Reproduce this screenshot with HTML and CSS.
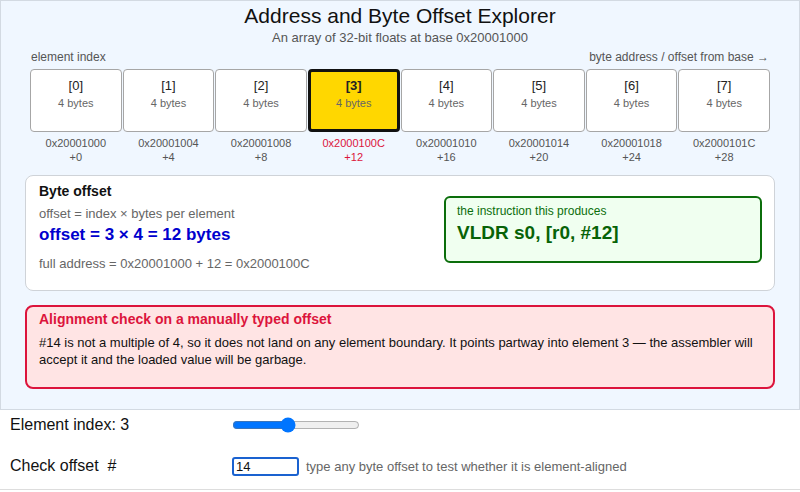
FILE: index.html
```html
<!DOCTYPE html>
<html lang="en">
<head>
    <meta charset="UTF-8">
    <meta name="viewport" content="width=device-width, initial-scale=1.0">
    <title>Address and Byte Offset Explorer</title>
    <link rel="stylesheet" href="styles.css">
</head>
<body>
    <div class="viz">
        <h2 class="title">Address and Byte Offset Explorer</h2>
        <p class="subtitle">An array of 32-bit floats at base 0x20001000</p>
        <div class="axis">
            <span>element index</span>
            <span>byte address / offset from base →</span>
        </div>
        <div class="cells" id="cells"></div>

        <div class="card">
            <div class="calc">
                <h3>Byte offset</h3>
                <p class="muted">offset = index × bytes per element</p>
                <p class="result" id="offset-result"></p>
                <p class="muted full" id="full-address"></p>
            </div>
            <div class="instr">
                <p>the instruction this produces</p>
                <p class="code" id="instr-code"></p>
            </div>
        </div>

        <div class="warn">
            <h3>Alignment check on a manually typed offset</h3>
            <p id="warn-text"></p>
        </div>
    </div>

    <div class="controls">
        <div class="row">
            <label for="index-slider">Element index: <span id="index-label">3</span></label>
            <input type="range" id="index-slider" class="slider" min="0" max="7" value="3">
        </div>
        <div class="row">
            <label for="offset-input">Check offset &nbsp;#</label>
            <input type="text" id="offset-input" class="offset-input" value="14">
            <span class="hint">type any byte offset to test whether it is element-aligned</span>
        </div>
    </div>

    <script>
        document.addEventListener("DOMContentLoaded", function () {
            const base = 0x20001000;
            const size = 4;
            const count = 8;

            const hex = n => "0x" + n.toString(16).toUpperCase();

            function render() {
                const index = parseInt(document.getElementById("index-slider").value, 10);
                const offset = index * size;
                document.getElementById("index-label").innerText = index;

                let html = "";
                for (let i = 0; i < count; i++) {
                    const sel = i === index ? " selected" : "";
                    html += `
                        <div class="col${sel}">
                            <div class="cell">
                                <div class="cell-index">[${i}]</div>
                                <div class="cell-size">${size} bytes</div>
                            </div>
                            <div class="addr">${hex(base + i * size)}</div>
                            <div class="addr">+${i * size}</div>
                        </div>
                    `;
                }
                document.getElementById("cells").innerHTML = html;

                document.getElementById("offset-result").innerText = `offset = ${index} × ${size} = ${offset} bytes`;
                document.getElementById("full-address").innerText = `full address = ${hex(base)} + ${offset} = ${hex(base + offset)}`;
                document.getElementById("instr-code").innerText = `VLDR s0, [r0, #${offset}]`;

                const typed = parseInt(document.getElementById("offset-input").value, 10) || 0;
                const warn = document.querySelector(".warn");
                if (typed % size !== 0) {
                    warn.style.display = "";
                    document.getElementById("warn-text").innerText =
                        `#${typed} is not a multiple of ${size}, so it does not land on any element boundary. It points partway into element ${Math.floor(typed / size)} — the assembler will accept it and the loaded value will be garbage.`;
                } else {
                    warn.style.display = "none";
                }
            }

            document.getElementById("index-slider").addEventListener("input", render);
            document.getElementById("offset-input").addEventListener("input", render);
            render();
        });
    </script>
</body>
</html>
```

FILE: styles.css
```css
* {
    margin: 0;
    padding: 0;
    box-sizing: border-box;
}
body {
    font-family: "Liberation Sans", Arial, sans-serif;
    color: #111;
    background: white;
}
.viz {
    width: 800px;
    background-color: #f0f7ff;
    border: 1px solid #d3dae2;
    padding: 3px 24px 20px;
}
.title {
    font-size: 21px;
    font-weight: normal;
    line-height: 24px;
    text-align: center;
    color: #111;
}
.subtitle {
    font-size: 13px;
    line-height: 15px;
    margin-top: 2px;
    text-align: center;
    color: #555;
}
.axis {
    display: flex;
    justify-content: space-between;
    font-size: 12px;
    line-height: 14px;
    color: #555;
    margin: 5px 6px 0;
}
.cells {
    display: grid;
    grid-template-columns: repeat(8, 1fr);
    gap: 1px;
    margin: 5px 5px 0;
}
.cell {
    height: 63px;
    background: white;
    border: 1px solid #a6a6a6;
    border-radius: 4px;
    text-align: center;
    padding-top: 8px;
}
.cell-index {
    font-size: 13px;
    line-height: 16px;
    color: #222;
}
.cell-size {
    font-size: 11px;
    line-height: 13px;
    margin-top: 3px;
    color: #666;
}
.selected .cell {
    background: #ffd700;
    border: 3px solid #111;
    padding-top: 6px;
}
.selected .cell-index {
    font-weight: bold;
}
.addr {
    font-size: 11px;
    line-height: 14px;
    text-align: center;
    color: #555;
}
.cell + .addr {
    margin-top: 4px;
}
.selected .addr {
    color: #dc143c;
}
.card {
    display: flex;
    justify-content: space-between;
    margin-top: 11px;
    background: white;
    border: 1px solid #cfd3d8;
    border-radius: 8px;
    padding: 6px 12px 19px 13px;
}
.calc h3 {
    font-size: 14px;
    line-height: 17px;
    margin-top: 1px;
}
.muted {
    font-size: 13px;
    line-height: 15px;
    color: #666;
    margin-top: 6px;
}
.result {
    font-size: 17px;
    line-height: 21px;
    font-weight: bold;
    color: #0000cd;
    margin-top: 3px;
}
.full {
    margin-top: 11px;
}
.instr {
    align-self: flex-start;
    margin-top: 14px;
    width: 318px;
    height: 67px;
    background: #f0fff0;
    border: 2px solid #0b6e0b;
    border-radius: 6px;
    padding: 6px 11px;
    color: #0b6e0b;
}
.instr p {
    font-size: 12px;
    line-height: 14px;
}
.instr .code {
    font-size: 19px;
    line-height: 22px;
    font-weight: bold;
    color: #076307;
    margin-top: 4px;
}
.warn {
    margin-top: 14px;
    background: #ffe4e4;
    border: 2px solid #dc143c;
    border-radius: 8px;
    padding: 4px 12px 18px;
}
.warn h3 {
    font-size: 14px;
    line-height: 17px;
    color: #dc143c;
}
.warn p {
    font-size: 13px;
    line-height: 16.8px;
    margin-top: 7px;
    color: #111;
}
.controls {
    width: 800px;
    padding: 1px 10px 8px;
    border-bottom: 1px solid #ddd;
}
.row {
    display: flex;
    align-items: center;
    height: 29px;
}
.row + .row {
    margin-top: 12px;
}
.row label {
    flex: 0 0 222px;
    font-size: 16px;
    color: #111;
}
.slider {
    width: 128px;
    margin: 0;
}
.offset-input {
    width: 67px;
    height: 19px;
    font-family: "Liberation Sans", Arial, sans-serif;
    font-size: 13px;
    padding: 0 2px;
    border: 2px solid #1a62d0;
    border-radius: 3px;
    outline: none;
    color: #111;
}
.hint {
    font-size: 13px;
    color: #666;
    margin-left: 7px;
}
```
